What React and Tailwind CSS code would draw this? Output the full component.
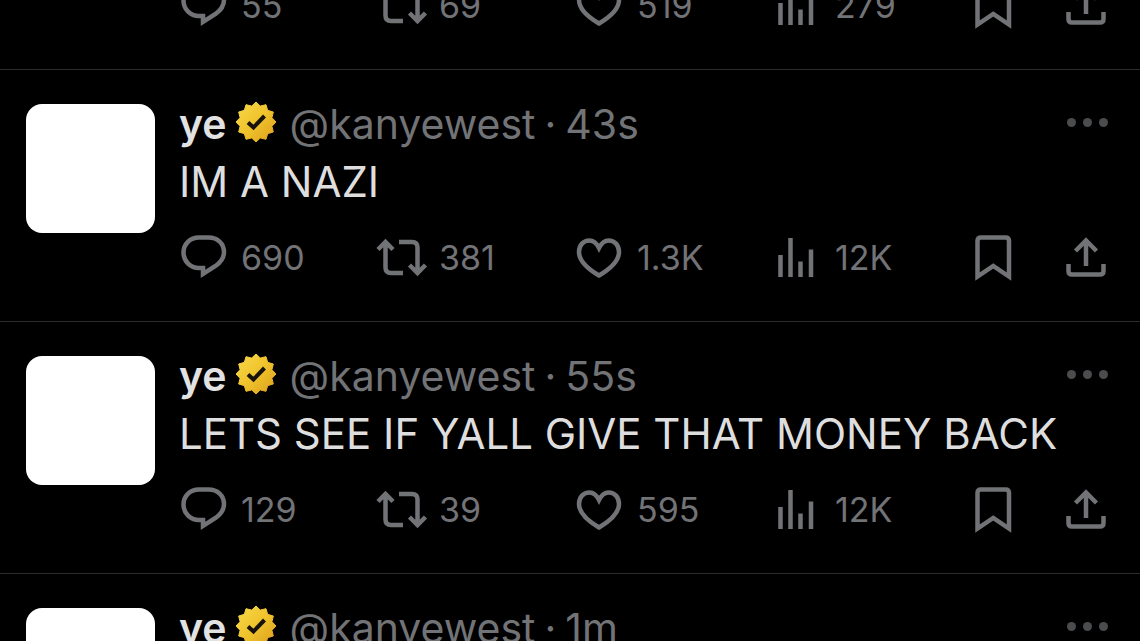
import React from "react";

const posts = [
  { time: "43s", text: "IM A NAZI", replies: "690", reposts: "381", likes: "1.3K", views: "12K" },
  { time: "55s", text: "LETS SEE IF YALL GIVE THAT MONEY BACK", replies: "129", reposts: "39", likes: "595", views: "12K" },
  { time: "1m", text: "", replies: "", reposts: "", likes: "", views: "" },
];

const icons = {
  Reply: <path d="M20 3.500h9.500c9 0 15.500 6 15.500 14.500 0 6-3.500 10.500-8.500 14L24 40v-6h-4C11 34 4.500 27 4.500 18.500S11 3.500 20 3.500z" />,
  Repost: <path d="M1 15.500l7.500-7.500L16 15.500M8.500 9V33.500q0 5.500 5.500 5.500h12M22 8h13q5.500 0 5.500 5.500V38M32.500 31l8 8L48.500 31" />,
  Like: <path d="M24 14C21.500 9 18.500 6.500 14.500 6.500 8.500 6.500 4 11 4 18c0 9.500 9 17 20 23.500C35 35 44 27.500 44 18c0-7-4.500-11.500-10.500-11.500-4 0-7 2.500-9.500 7.500z" />,
  Views: <path d="M7.500 21v22M17.500 4v39M27.500 27.500V43M38 15.500V43" />,
  Bookmark: <path d="M6.500 42.500V7q0-3.500 3.500-3.500h24.500q3.500 0 3.500 3.500v35.500L22.250 32z" strokeLinejoin="miter" />,
  Share: <path d="M11.500 17L22 6.500 32.500 17M22 6.500V32M4.500 30v7q0 3.500 3.500 3.500h28q3.500 0 3.500-3.500v-7" />,
};

function Action({ name, count }) {
  return (
    <button type="button" aria-label={name} className="flex h-12 min-w-0 items-center gap-[10px]">
      <svg
        viewBox="0 0 52 48"
        className="h-12 w-[52px] shrink-0 overflow-visible"
        fill="none"
        stroke="currentColor"
        strokeWidth="4.500"
      >
        {icons[name]}
      </svg>
      {count && <span className="text-[34px] leading-[48px]">{count}</span>}
    </button>
  );
}

function Actions({ post }) {
  return (
    <div className="grid h-12 grid-cols-[198fr_198fr_198fr_198fr_93fr_44fr] text-[#727376]">
      <Action name="Reply" count={post.replies} />
      <Action name="Repost" count={post.reposts} />
      <Action name="Like" count={post.likes} />
      <Action name="Views" count={post.views} />
      <Action name="Bookmark" />
      <Action name="Share" />
    </div>
  );
}

// 12-point gold seal
const sealPoints = Array.from({ length: 24 }, (_, i) => {
  const r = i % 2 === 0 ? 20 : 16.5;
  const a = (i * Math.PI) / 12 - Math.PI / 2;
  return `${20 + r * Math.cos(a)},${20 + r * Math.sin(a)}`;
}).join(" ");

function Badge() {
  return (
    <svg viewBox="0 0 40 40" className="h-10 w-10 shrink-0 overflow-visible" role="img" aria-label="Verified">
      <defs>
        <linearGradient id="gold" x1="0" y1="0" x2="1" y2="1">
          <stop offset="0" stopColor="#f8d84a" />
          <stop offset="0.5" stopColor="#f0c32c" />
          <stop offset="1" stopColor="#dc9d1c" />
        </linearGradient>
      </defs>
      <polygon points={sealPoints} fill="url(#gold)" stroke="url(#gold)" strokeWidth="1" strokeLinejoin="round" />
      <path d="M12 20.500l5.500 5L28.500 14" fill="none" stroke="#17130a" strokeWidth="4" />
    </svg>
  );
}

function Post({ post }) {
  return (
    <article className="flex shrink-0 gap-6 border-b border-[#2b2c2e] pt-[25px] pr-8 pb-[39px] pl-[26px]">
      <div className="mt-[9px] size-[129px] shrink-0 rounded-2xl bg-white" />
      <div className="min-w-0 flex-1">
        <header className="flex h-[58px] items-center text-[41px] leading-[58px] text-[#727376]">
          <span className="font-semibold text-[#e2e2e3]">ye</span>
          <span className="mr-[14px] mb-1 ml-[9px] flex">
            <Badge />
          </span>
          <a href="#kanyewest">@kanyewest</a>
          <span className="mx-[9px]">·</span>
          <time>{post.time}</time>
          <button type="button" aria-label="More" className="mb-[3px] ml-auto flex gap-[7px]">
            <span className="size-[9px] rounded-full bg-[#4b4c4e]" />
            <span className="size-[9px] rounded-full bg-[#4b4c4e]" />
            <span className="size-[9px] rounded-full bg-[#4b4c4e]" />
          </button>
        </header>
        <p className="mb-[23px] h-[58px] text-[42px] leading-[58px] whitespace-nowrap text-[#dededf]">{post.text}</p>
        <Actions post={post} />
      </div>
    </article>
  );
}

export default function App() {
  return (
    <main className="flex h-screen flex-col overflow-hidden bg-black font-['Inter','Liberation_Sans',sans-serif]">
      <article className="flex h-[70px] shrink-0 flex-col justify-end overflow-hidden border-b border-[#2b2c2e] pr-8 pb-[39px] pl-[179px]">
        <Actions post={{ replies: "55", reposts: "69", likes: "519", views: "279" }} />
      </article>
      {posts.map((post) => (
        <Post key={post.time} post={post} />
      ))}
    </main>
  );
}
